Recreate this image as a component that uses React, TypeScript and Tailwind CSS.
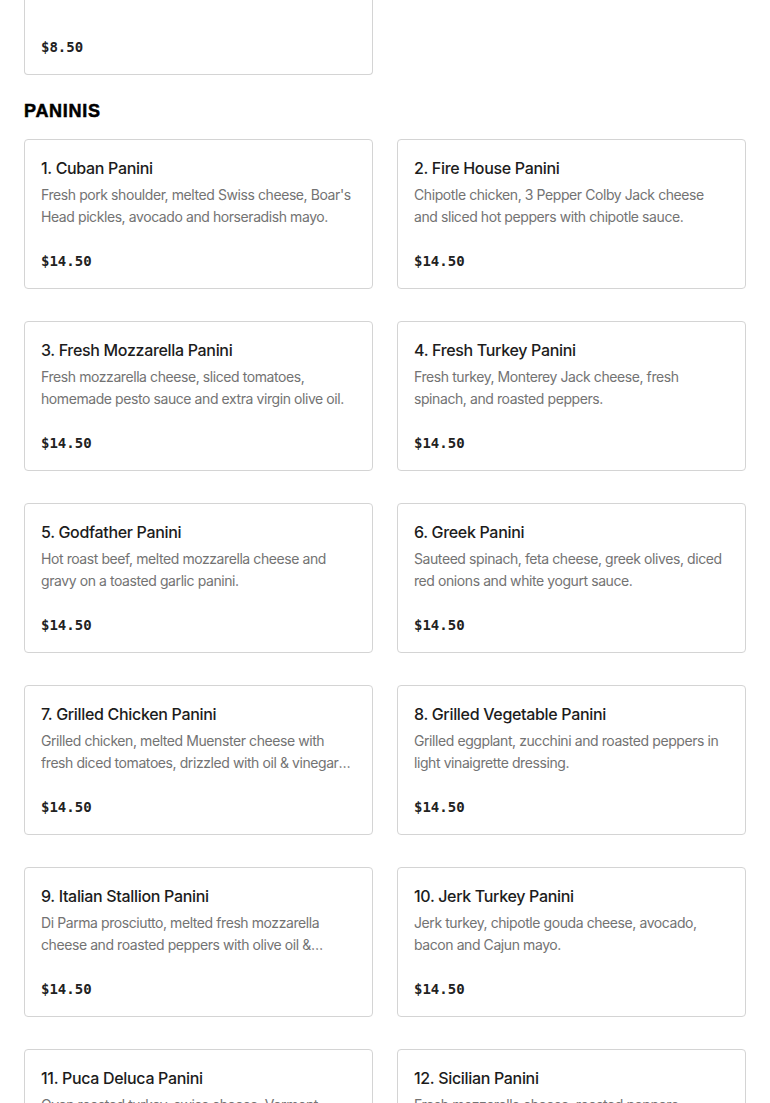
import React from "react";

const items = [
  { t: "1. Cuban Panini", d: "Fresh pork shoulder, melted Swiss cheese, Boar's Head pickles, avocado and horseradish mayo." },
  { t: "2. Fire House Panini", d: "Chipotle chicken, 3 Pepper Colby Jack cheese and sliced hot peppers with chipotle sauce." },
  { t: "3. Fresh Mozzarella Panini", d: "Fresh mozzarella cheese, sliced tomatoes, homemade pesto sauce and extra virgin olive oil." },
  { t: "4. Fresh Turkey Panini", d: "Fresh turkey, Monterey Jack cheese, fresh spinach, and roasted peppers." },
  { t: "5. Godfather Panini", d: "Hot roast beef, melted mozzarella cheese and gravy on a toasted garlic panini." },
  { t: "6. Greek Panini", d: "Sauteed spinach, feta cheese, greek olives, diced red onions and white yogurt sauce." },
  { t: "7. Grilled Chicken Panini", d: "Grilled chicken, melted Muenster cheese with fresh diced tomatoes, drizzled with oil & vinegar dressing." },
  { t: "8. Grilled Vegetable Panini", d: "Grilled eggplant, zucchini and roasted peppers in light vinaigrette dressing." },
  { t: "9. Italian Stallion Panini", d: "Di Parma prosciutto, melted fresh mozzarella cheese and roasted peppers with olive oil & balsamic vinegar." },
  { t: "10. Jerk Turkey Panini", d: "Jerk turkey, chipotle gouda cheese, avocado, bacon and Cajun mayo." },
  { t: "11. Puca Deluca Panini", d: "Oven roasted turkey, swiss cheese, Vermont cheddar and honey mustard." },
  { t: "12. Sicilian Panini", d: "Fresh mozzarella cheese, roasted peppers, sopressata and pesto sauce." },
];

const sans = { fontFamily: "Inter, 'Noto Sans', sans-serif" };
const mono = { fontFamily: "'DejaVu Sans Mono', 'Liberation Mono', monospace" };

function Card({ t, d }: { t: string; d: string }) {
  return (
    <div className="h-[150px] border border-[#d4d4d4] rounded-[4px] bg-white px-4 pt-[17px]">
      <div className="text-[16px] leading-[22px] font-medium tracking-[-0.02em] text-[#1c1c1c] truncate" style={sans}>
        {t}
      </div>
      <div className="mt-[5px] text-[14px] leading-[22px] tracking-[-0.03em] text-[#737373] line-clamp-2 h-[44px]" style={sans}>
        {d}
      </div>
      <div className="mt-[23px] text-[14px] leading-5 font-bold text-[#222]" style={mono}>
        $14.50
      </div>
    </div>
  );
}

export default function App() {
  return (
    <div className="bg-white min-h-screen px-6 pb-10">
      <div className="grid grid-cols-2 gap-6">
        <div className="border-x border-b border-[#d4d4d4] rounded-b-[4px] h-[75px] flex flex-col justify-end px-4 pb-[17px]">
          <div className="text-[14px] leading-5 font-bold text-[#222]" style={mono}>
            $8.50
          </div>
        </div>
      </div>
      <h2
        className="mt-[22px] mb-[14px] text-[18px] leading-7 font-black tracking-[0.04em] text-black [-webkit-text-stroke:0.5px_black]"
        style={{ fontFamily: "'Liberation Sans', Arial, sans-serif" }}
      >
        PANINIS
      </h2>
      <div className="grid grid-cols-2 gap-x-6 gap-y-8">
        {items.map((it) => (
          <Card key={it.t} t={it.t} d={it.d} />
        ))}
      </div>
    </div>
  );
}
